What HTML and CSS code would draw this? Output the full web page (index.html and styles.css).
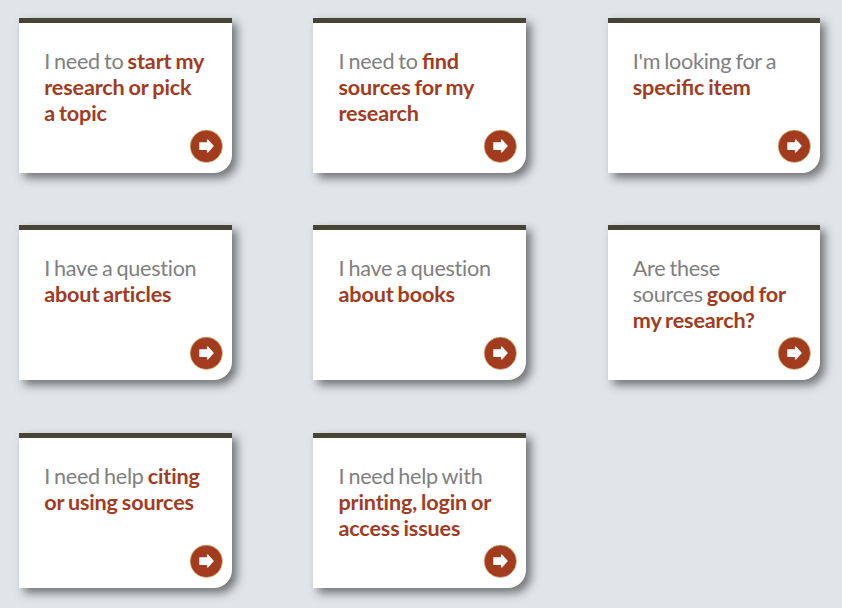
FILE: index.html
```html
<!DOCTYPE html>
<html lang="en">
<head>
    <meta charset="UTF-8">
    <meta name="viewport" content="width=device-width, initial-scale=1.0">
    <title>Research Help</title>
    <link rel="stylesheet" href="styles.css">
</head>
<body>

    <svg class="symbols">
        <symbol id="arrow" viewBox="0 0 34 34">
            <circle cx="17.3" cy="17.3" r="16.2" fill="#a33b1f" stroke="#dccf8c" stroke-width="0.7"/>
            <path d="M10.3 13.2h7.6v-2.6h1.2l5.8 6.4-5.8 6.6h-1.2v-2.6h-7.6z" fill="#fff"/>
        </symbol>
    </svg>

    <div class="card-grid">
        <a class="card">
            <p>I need to <strong>start my research or pick a&nbsp;topic</strong></p>
            <svg class="arrow"><use href="#arrow"/></svg>
        </a>
        <a class="card joined">
            <p>I need to <strong>find sources for my research</strong></p>
            <svg class="arrow"><use href="#arrow"/></svg>
        </a>
        <a class="card joined">
            <p>I'm looking for a <strong>specific item</strong></p>
            <svg class="arrow"><use href="#arrow"/></svg>
        </a>
        <a class="card">
            <p>I have a question <strong>about articles</strong></p>
            <svg class="arrow"><use href="#arrow"/></svg>
        </a>
        <a class="card">
            <p>I have a question <strong>about books</strong></p>
            <svg class="arrow"><use href="#arrow"/></svg>
        </a>
        <a class="card">
            <p>Are these sources&nbsp;<strong>good for my research?</strong></p>
            <svg class="arrow"><use href="#arrow"/></svg>
        </a>
        <a class="card">
            <p>I need help <strong>citing or using sources</strong></p>
            <svg class="arrow"><use href="#arrow"/></svg>
        </a>
        <a class="card">
            <p>I need help with <strong>printing, login or access issues</strong></p>
            <svg class="arrow"><use href="#arrow"/></svg>
        </a>
    </div>

</body>
</html>
```
FILE: styles.css
```css
body {
    margin: 0;
    background-color: #e1e4e9;
    font-family: Lato, sans-serif;
    color: #808080;
}
.symbols {
    display: none;
}
.card-grid {
    display: grid;
    grid-template-columns: repeat(3, 212.6px);
    grid-auto-rows: 155px;
    column-gap: 81.7px;
    row-gap: 52.4px;
    padding: 18px 0 20px 19px;
}
.card {
    position: relative;
    box-sizing: border-box;
    padding: 25px 24px 25px 25.2px;
    background-color: #fff;
    border-top: 5px solid #454435;
    border-bottom-right-radius: 18px;
    box-shadow: 5px 5px 10px rgba(0, 0, 0, 0.5);
}
.card p {
    margin: 0;
    font-size: 21.6px;
    line-height: 26px;
    letter-spacing: -0.28px;
    word-spacing: -1.1px;
}
.card strong {
    color: #a33b1f;
    font-weight: bold;
    letter-spacing: -0.15px;
}
/* keep the fi ligature in these headings */
.joined strong {
    font-feature-settings: "liga" 1;
}
.arrow {
    position: absolute; /* pinned over the rounded corner */
    right: 9px;
    bottom: 10px;
    width: 34px;
    height: 34px;
}
```
